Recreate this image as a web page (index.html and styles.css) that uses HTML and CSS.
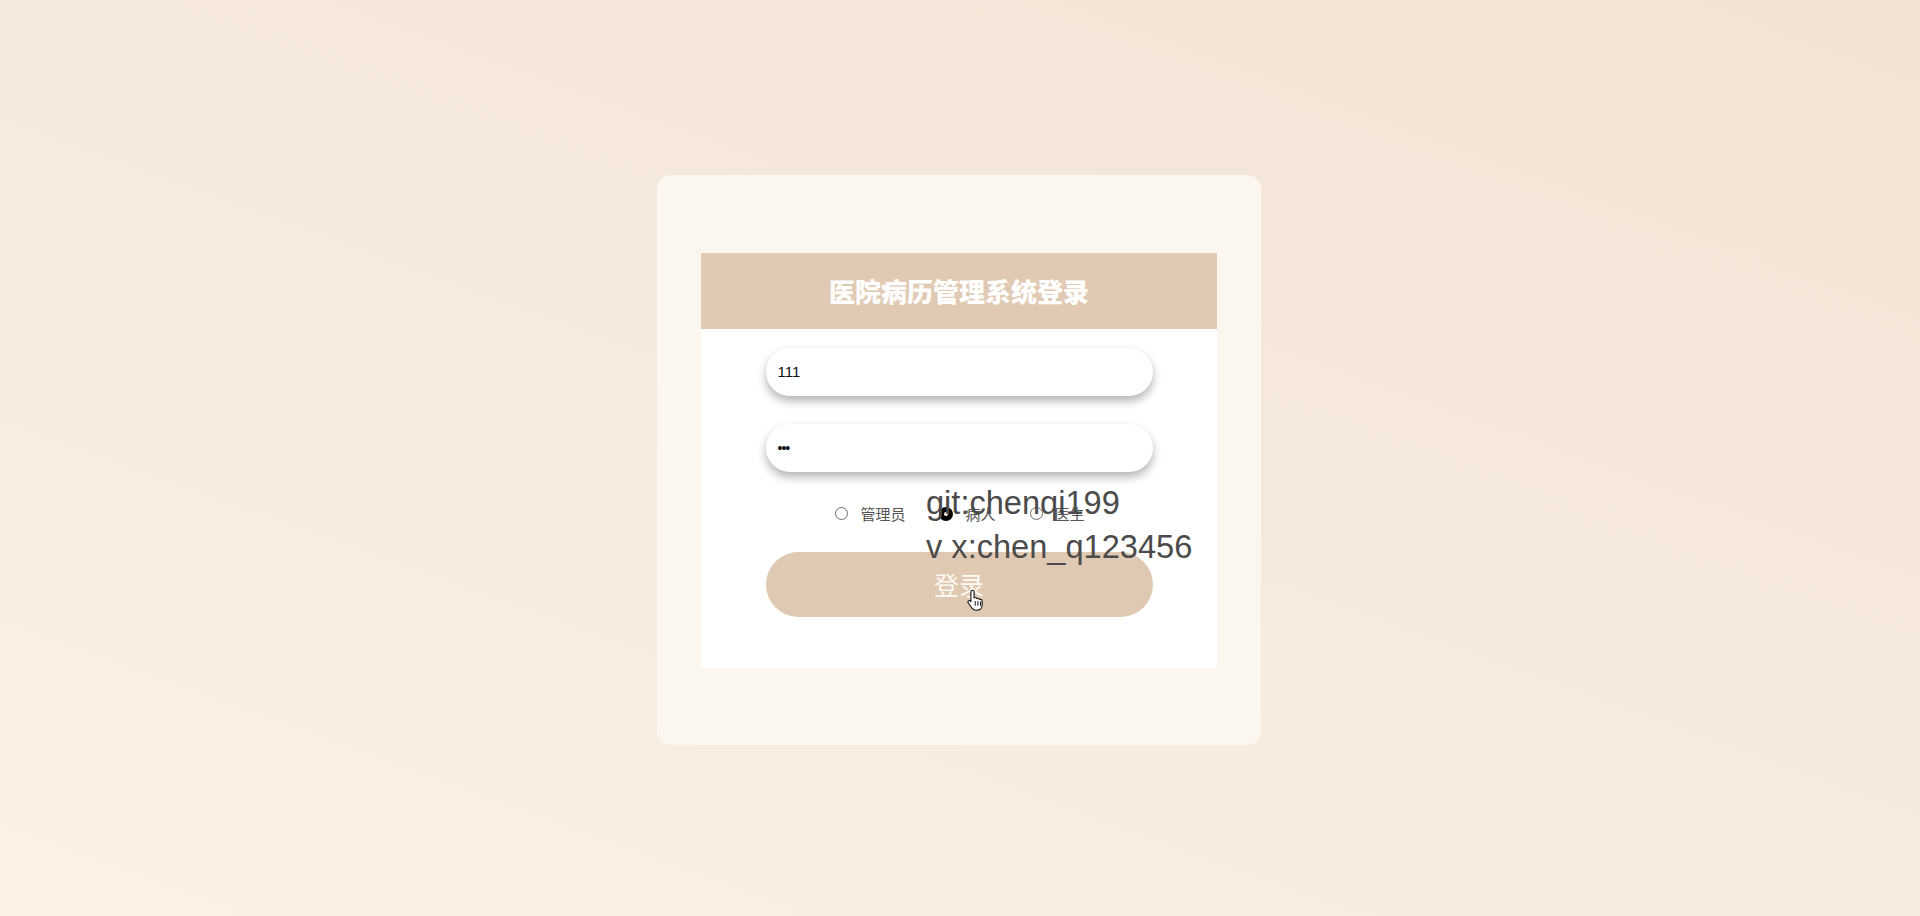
FILE: index.html
```html
<!DOCTYPE html>
<html lang="zh-CN">
<head>
<meta charset="utf-8">
<title>医院病历管理系统登录</title>
<link rel="stylesheet" href="styles.css">
</head>
<body>
<main class="stage">
  <section class="card">
    <div class="panel">
      <header class="panel-head">
        <h1 class="title">医院病历管理系统登录</h1>
      </header>
      <form class="form">
        <input class="field" type="text" value="111">
        <input class="field field-pass" type="password" value="111">
        <div class="roles">
          <label class="role"><span class="dot"></span><span class="role-text">管理员</span></label>
          <label class="role"><span class="dot dot-on"></span><span class="role-text">病人</span></label>
          <label class="role"><span class="dot"></span><span class="role-text">医生</span></label>
        </div>
        <button class="submit" type="button">登录</button>
      </form>
    </div>
  </section>
</main>
<div class="watermark">git:chenqi199<br>v x:chen_q123456</div>
<svg class="cursor" width="18" height="22" viewBox="0 0 18 22">
  <path d="M5.5 1.2c.9 0 1.6.7 1.6 1.6v6.1c.3-.3.7-.4 1.1-.4.8 0 1.4.5 1.6 1.2.3-.3.7-.4 1.1-.4.8 0 1.4.5 1.6 1.2.3-.2.6-.3 1-.3.9 0 1.6.7 1.6 1.6v4.3c0 2.9-2.1 5.2-5 5.2H9c-1.7 0-3-.8-4-2.1L1.3 14c-.5-.7-.4-1.6.2-2.1.6-.5 1.5-.4 2 .2l.4.5V2.8c0-.9.7-1.6 1.6-1.6z" fill="#fff" stroke="#111" stroke-width="1.1" stroke-linejoin="round"/>
  <path d="M8.2 12.5v3.8M10.9 12.5v3.8M13.6 12.8v3.5" stroke="#111" stroke-width="1" stroke-linecap="round"/>
</svg>
</body>
</html>
```
FILE: styles.css
```css
html, body {
  margin: 0;
  padding: 0;
}
body {
  position: relative;
  min-height: 916px;
  background: linear-gradient(200deg, #f2e4d5 0%, #f6eadd 50%, #fcf1e5 100%);
  font-family: "Liberation Sans", "Noto Sans CJK SC", sans-serif;
  overflow: hidden;
}
.stage {
  height: 916px;
  display: flex;
  align-items: center;
  justify-content: center;
}
.card {
  width: 604px;
  height: 570px;
  margin-left: -2px;
  margin-top: 4px;
  border-radius: 14px;
  background: #fbf6ee;
  display: flex;
  align-items: center;
  justify-content: center;
}
.panel {
  width: 516px;
  height: 415px;
  background: #ffffff;
  display: flex;
  flex-direction: column;
}
.panel-head {
  height: 76px;
  background: #e0cab3;
  display: flex;
  align-items: center;
  justify-content: center;
}
.title {
  margin: 0;
  color: #ffffff;
  font-family: "Noto Sans CJK SC", sans-serif;
  font-weight: 900;
  font-size: 26px;
  letter-spacing: 0;
  line-height: 1;
}
.form {
  margin: 0;
  padding-top: 19px;
  display: flex;
  flex-direction: column;
  align-items: center;
}
.field {
  box-sizing: border-box;
  width: 387px;
  height: 48px;
  border: none;
  border-radius: 24px;
  background: #ffffff;
  box-shadow: 0 5px 10px rgba(0, 0, 0, 0.3);
  padding: 0 12px;
  font-family: "Liberation Sans", sans-serif;
  font-size: 15px;
  color: #111;
  outline: none;
}
.field-pass {
  margin-top: 28px;
  font-size: 14px;
  letter-spacing: -1px;
}
.roles {
  margin-top: 32px;
  height: 20px;
  display: flex;
  align-items: center;
  justify-content: center;
  gap: 34px;
  padding-left: 2px;
}
.role {
  display: flex;
  align-items: center;
  gap: 12px;
}
.dot {
  box-sizing: border-box;
  width: 13px;
  height: 13px;
  border-radius: 50%;
  border: 1px solid #6b6b6b;
  background: #fff;
}
.dot-on {
  width: 14px;
  height: 14px;
  border: 5px solid #000;
  background: #fff;
}
.role-text {
  font-family: "Noto Sans CJK SC", sans-serif;
  font-size: 15px;
  color: #555;
  line-height: 20px;
}
.submit {
  margin-top: 28px;
  width: 387px;
  height: 65px;
  border: none;
  border-radius: 33px;
  background: #e0c9b2;
  color: #fffaf3;
  font-family: "Noto Sans CJK SC", sans-serif;
  font-size: 25px;
  line-height: 1;
  padding: 0;
}
.watermark {
  position: absolute;
  left: 926px;
  top: 481px;
  font-family: "Liberation Sans", sans-serif;
  font-size: 32.6px;
  line-height: 44px;
  color: #4b4b4b;
  white-space: nowrap;
}
.cursor {
  position: absolute;
  left: 967px;
  top: 589px;
}
```
